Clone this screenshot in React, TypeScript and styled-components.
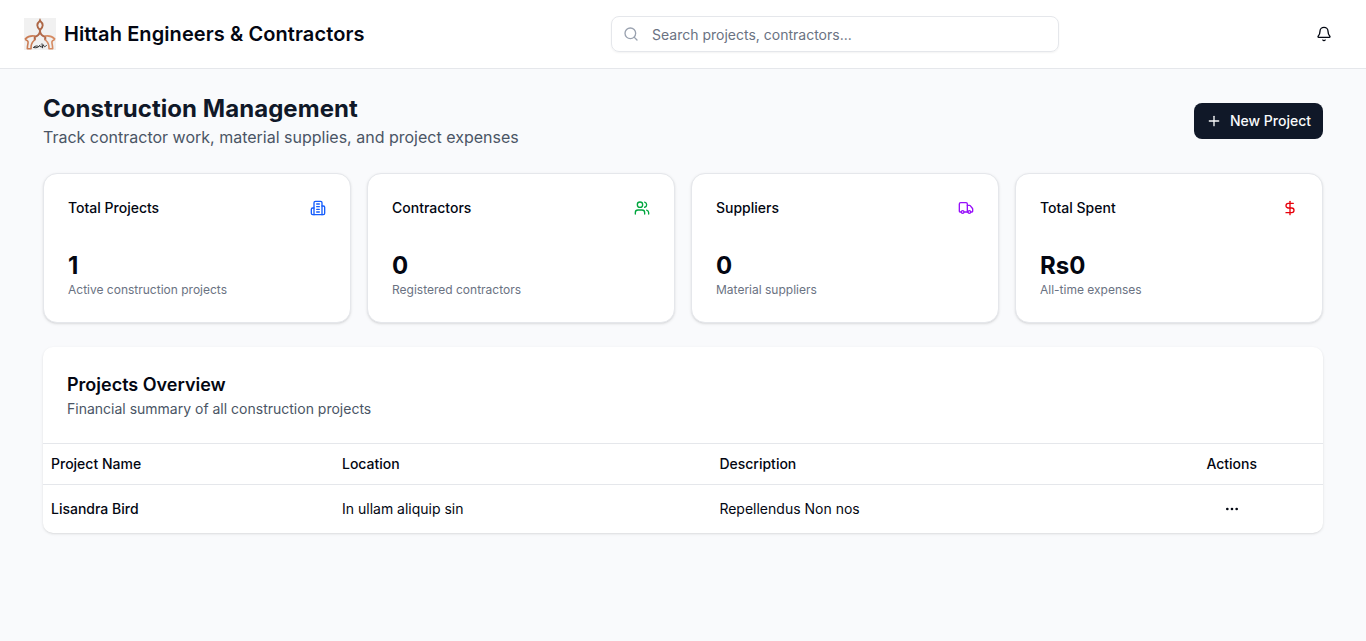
import React from "react";
import styled, { createGlobalStyle } from "styled-components";
import { Bell, DollarSign, Ellipsis, Plus, Search, Truck, Users } from "lucide-react";

const GlobalStyle = createGlobalStyle`
  *, *::before, *::after { box-sizing: border-box; }
  body { margin: 0; background: #f9fafb; color: #030712; font-family: Inter, "Liberation Sans", sans-serif; font-size: 14px; line-height: 20px; }
  h1, h2, h3, p { margin: 0; }
  button { font: inherit; border: 0; }
`;

const Page = styled.div`
  min-height: 641px;
  background: #f9fafc;
`;

const Header = styled.header`
  height: 69px;
  padding: 0 24px;
  display: flex;
  align-items: center;
  justify-content: space-between;
  background: #fff;
  border-bottom: 1px solid #e5e7eb;
`;

const Brand = styled.div`
  display: flex;
  align-items: center;
  gap: 8px;
  font-size: 20px;
  line-height: 28px;
  font-weight: 600;
  letter-spacing: 0.09px;
  color: #030712;
`;

const SearchBox = styled.label`
  width: 448px;
  height: 36px;
  margin-right: 0.5px;
  padding: 0 11px;
  display: flex;
  align-items: center;
  gap: 13px;
  border: 1px solid #e5e7eb;
  border-radius: 8px;
  box-shadow: 0 1px 2px rgba(0, 0, 0, 0.05);
  color: #99a1af;
`;

const SearchInput = styled.input`
  flex: 1;
  border: 0;
  padding: 2px 0 0;
  outline: 0;
  background: transparent;
  font: inherit;
  &::placeholder { color: #6a7282; opacity: 1; }
`;

const BellButton = styled.button`
  width: 36px;
  height: 36px;
  padding: 0;
  display: grid;
  place-items: center;
  background: transparent;
  color: #030712;
`;

const Main = styled.main`
  padding: 24px 43px;
`;

const Intro = styled.div`
  height: 56px;
  display: flex;
  justify-content: space-between;
  align-items: center;
`;

const Title = styled.h1`
  font-size: 24px;
  line-height: 32px;
  font-weight: 700;
  letter-spacing: 0.05px;
  color: #101828;
`;

const Subtitle = styled.p`
  font-size: 16px;
  line-height: 24px;
  color: #4a5565;
`;

const NewButton = styled.button`
  height: 36px;
  padding: 0 12px;
  display: flex;
  align-items: center;
  gap: 8px;
  border-radius: 8px;
  background: #101828;
  color: #f9fafb;
  font-weight: 500;
`;

const Stats = styled.section`
  margin-top: 24px;
  display: grid;
  grid-template-columns: repeat(4, 1fr);
  gap: 16px;
`;

const Card = styled.article`
  height: 150px;
  padding: 24px;
  background: #fff;
  border: 1px solid #e5e7eb;
  border-radius: 14px;
  box-shadow: 0 1px 3px rgba(0, 0, 0, 0.1), 0 1px 2px -1px rgba(0, 0, 0, 0.1);
`;

const CardHead = styled.div<{ $tone: string }>`
  height: 20px;
  display: flex;
  align-items: center;
  justify-content: space-between;
  font-weight: 500;
  svg { color: ${(p) => p.$tone}; }
`;

const Value = styled.div`
  margin-top: 32px;
  font-size: 24px;
  line-height: 32px;
  font-weight: 700;
`;

const Note = styled.p`
  font-size: 12px;
  line-height: 16px;
  color: #6a7282;
`;

const Panel = styled.section`
  margin-top: 24px;
  background: #fff;
  border-radius: 10px;
  overflow: hidden;
  box-shadow: 0 1px 3px rgba(0, 0, 0, 0.1), 0 1px 2px -1px rgba(0, 0, 0, 0.1);
`;

const PanelHead = styled.div`
  height: 96px;
  padding: 24px;
`;

const PanelTitle = styled.h2`
  font-size: 18px;
  line-height: 28px;
  font-weight: 600;
`;

const PanelText = styled.p`
  color: #4a5565;
`;

const Row = styled.div<{ $height: number }>`
  height: ${(p) => p.$height}px;
  display: grid;
  grid-template-columns: 291px 377.4px 429px 182.6px;
  align-items: center;
  border-top: 1px solid #e5e7eb;
`;

const Cell = styled.div<{ $strong?: boolean; $center?: boolean }>`
  padding: 0 8px;
  display: flex;
  justify-content: ${(p) => (p.$center ? "center" : "flex-start")};
  font-weight: ${(p) => (p.$strong ? 500 : 400)};
`;

// Office block with a side wing on each side and four floor lines.
function OfficeIcon({ size }: { size: number }) {
  return (
    <svg width={size} height={size} viewBox="0 0 24 24" fill="none" stroke="currentColor" strokeWidth="2" strokeLinecap="round" strokeLinejoin="round">
      <path d="M6 22V4a2 2 0 0 1 2-2h8a2 2 0 0 1 2 2v18Z" />
      <path d="M6 12H4a2 2 0 0 0-2 2v6a2 2 0 0 0 2 2h2" />
      <path d="M18 9h2a2 2 0 0 1 2 2v9a2 2 0 0 1-2 2h-2" />
      <path d="M10 6h4M10 10h4M10 14h4M10 18h4" />
    </svg>
  );
}

const stats = [
  { label: "Total Projects", value: "1", note: "Active construction projects", icon: OfficeIcon, tone: "#155dfc" },
  { label: "Contractors", value: "0", note: "Registered contractors", icon: Users, tone: "#00a63e" },
  { label: "Suppliers", value: "0", note: "Material suppliers", icon: Truck, tone: "#9810fa" },
  { label: "Total Spent", value: "Rs0", note: "All-time expenses", icon: DollarSign, tone: "#e7000b" },
];

// Copper emblem: a looped finial over two domed wings, with a dark signature at the base.
function Logo() {
  return (
    <svg width="32" height="32" viewBox="0 0 32 32" fill="none" strokeLinecap="round" strokeLinejoin="round">
      <rect width="32" height="32" fill="#f1f1f1" />
      <path d="M16 1v2" stroke="#a8643f" strokeWidth="1.2" />
      <path d="M16 2.800c-3.600 3-3.600 6 0 9.200c3.600-3.200 3.600-6.200 0-9.200z" stroke="#ad6645" strokeWidth="1.900" />
      <path d="M16 11.500v2.500c-.8 2.600-2.800 4.200-5.200 4.700v2.800M16 14c.8 2.600 2.800 4.200 5.200 4.700v2.800" stroke="#b0684a" strokeWidth="2.100" />
      <path d="M10.500 18c-3.500-.5-7 .7-9.200 2.800l1 1.500c1.700.3 2 1.500 1.700 3c-.4 1.800-.7 3.200-.7 5.400h3.700c-.3-3.500.6-6 3.500-8.700" stroke="#cb7d55" strokeWidth="1.600" />
      <path d="M21.500 18c3.500-.5 7 .7 9.200 2.800l-1 1.500c-1.700.3-2 1.500-1.700 3c.4 1.800.7 3.200.7 5.400H25c.3-3.500-.6-6-3.500-8.700" stroke="#d68b62" strokeWidth="1.600" />
      <path d="M9.500 29.500c2.500.8 5 .2 6.500-2.300M10 29c1.500-1.300 3-1.300 4.500-.5M16 28.500c2 .9 3 .6 3.500-1.700c.3 2.500 1.700 2.500 3 .5M18 25.800l.6 4" stroke="#303030" strokeWidth="1" />
    </svg>
  );
}

export default function App() {
  return (
    <Page>
      <GlobalStyle />
      <Header>
        <Brand><Logo />Hittah Engineers &amp; Contractors</Brand>
        <SearchBox>
          <Search size={16} />
          <SearchInput placeholder="Search projects, contractors..." />
        </SearchBox>
        <BellButton aria-label="Notifications"><Bell size={16} /></BellButton>
      </Header>
      <Main>
        <Intro>
          <div>
            <Title>Construction Management</Title>
            <Subtitle>Track contractor work, material supplies, and project expenses</Subtitle>
          </div>
          <NewButton><Plus size={16} />New Project</NewButton>
        </Intro>
        <Stats>
          {stats.map(({ label, value, note, icon: Icon, tone }) => (
            <Card key={label}>
              <CardHead $tone={tone}>{label}<Icon size={16} /></CardHead>
              <Value>{value}</Value>
              <Note>{note}</Note>
            </Card>
          ))}
        </Stats>
        <Panel>
          <PanelHead>
            <PanelTitle>Projects Overview</PanelTitle>
            <PanelText>Financial summary of all construction projects</PanelText>
          </PanelHead>
          <Row $height={41}>
            <Cell $strong>Project Name</Cell>
            <Cell $strong>Location</Cell>
            <Cell $strong>Description</Cell>
            <Cell $strong $center>Actions</Cell>
          </Row>
          <Row $height={49}>
            <Cell $strong>Lisandra Bird</Cell>
            <Cell>In ullam aliquip sin</Cell>
            <Cell>Repellendus Non nos</Cell>
            <Cell $center><Ellipsis size={16} /></Cell>
          </Row>
        </Panel>
      </Main>
    </Page>
  );
}
